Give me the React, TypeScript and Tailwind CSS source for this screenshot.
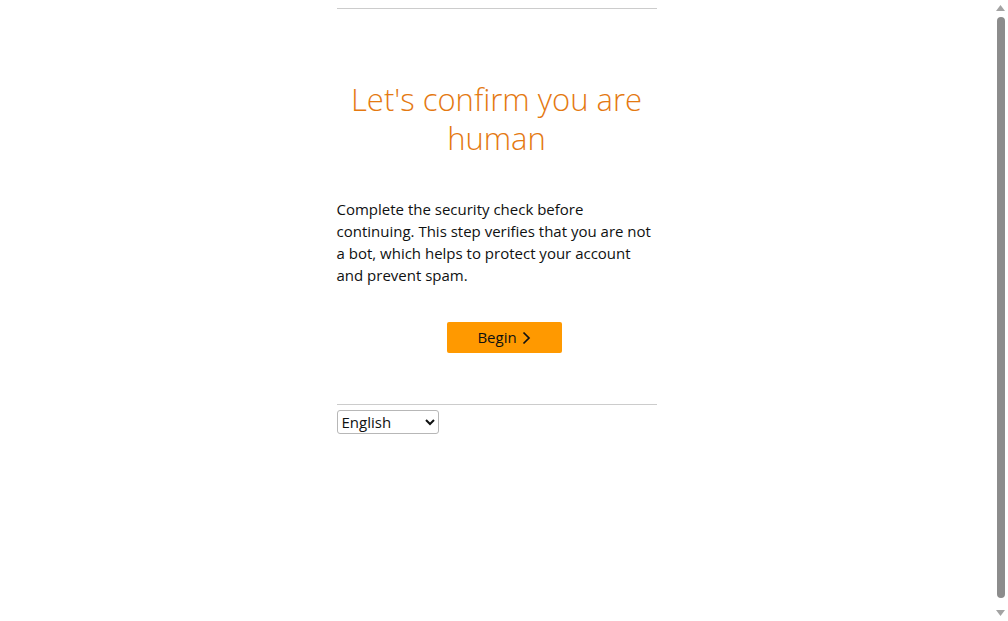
import React from 'react';

const ScrollBar: React.FC = () => (
  <div className="flex w-[15px] shrink-0 flex-col items-center bg-white">
    <svg width="15" height="15" viewBox="0 0 15 15" className="shrink-0">
      <path d="M3 11 7.5 5 12 11Z" fill="#a3a3a3" />
    </svg>
    <div className="mt-[2px] w-[8px] flex-1 rounded-[4px] bg-[#8c8c8c]" />
    <svg width="15" height="15" viewBox="0 0 15 15" className="mt-[8px] shrink-0">
      <path d="M3 4 7.5 10 12 4Z" fill="#a3a3a3" />
    </svg>
  </div>
);

const App: React.FC = () => {
  return (
    <div className="flex h-[621px] overflow-hidden bg-white font-['Open_Sans',sans-serif] text-[#0f1111]">
      <div className="flex-1">
        <div className="mx-auto w-[320px] pt-2">
          <hr className="border-t border-[#cccccc]" />

          <h1 className="mt-[71px] text-center text-[31px] leading-[39px] font-light text-[#e47911]">
            Let's confirm you are human
          </h1>

          <p className="mt-[40px] text-[15px] leading-[22px]">
            Complete the security check before continuing. This step verifies that you are not a bot, which
            helps to protect your account and prevent spam.
          </p>

          <div className="mt-[36px] pl-[110px]">
            <button className="flex h-[31px] w-[115px] items-center justify-center gap-[5px] rounded-[2px] bg-[#ff9900] text-[15px] text-[#0f1111]">
              Begin
              <svg width="9" height="14" viewBox="0 0 9 14" fill="none">
                <path d="M1.5 1.5 7 7 1.5 12.5" stroke="#0f1111" strokeWidth="1.7" />
              </svg>
            </button>
          </div>

          <hr className="mt-[51px] border-t border-[#cccccc]" />

          <select className="mt-[5px] h-[24px] w-[102px] rounded-[3px] border border-[#b7b7b7] text-[15px]">
            <option>English</option>
          </select>
        </div>
      </div>
      <ScrollBar />
    </div>
  );
};

export default App;
